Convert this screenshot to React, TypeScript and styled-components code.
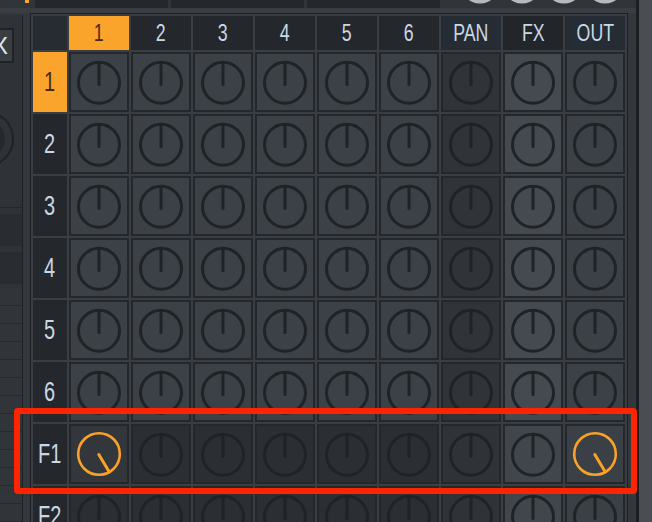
import styled, { createGlobalStyle } from 'styled-components';

const GlobalStyle = createGlobalStyle`
  html, body {
    margin: 0;
    width: 652px;
    height: 522px;
    overflow: hidden;
    background: #33373c;
    font-family: "Liberation Sans", Arial, sans-serif;
  }
`;

const ORANGE = '#fba42c';

const Screen = styled.div`
  position: relative;
  display: flex;
  width: 652px;
  height: 522px;
  overflow: hidden;
`;

const Workspace = styled.div`
  display: flex;
  flex-direction: column;
  width: 636px;
  flex-shrink: 0;
  background: #34383d;
`;

const TopStrip = styled.div`
  display: flex;
  flex-shrink: 0;
  align-items: flex-start;
  height: 8px;
  padding-left: 25px;
  padding-right: 8px;
  background: #31353a;
`;

const StripTick = styled.div`
  width: 4px;
  height: 3px;
  background: ${ORANGE};
  margin-right: 6px;
`;

const StripSlots = styled.div`
  display: flex;
  gap: 3px;
`;

const StripSlot = styled.div`
  width: 133px;
  height: 8px;
  background: #24282c;
`;

const StripDials = styled.svg`
  margin-left: auto;
  display: block;
`;

const StripGap = styled.div`
  flex-shrink: 0;
  height: 5px;
  background: #3a3e43;
`;

const Body = styled.div`
  display: flex;
  flex-shrink: 0;
  align-items: flex-start;
`;

const LeftPanel = styled.div`
  display: flex;
  flex-direction: column;
  flex-shrink: 0;
  width: 22px;
  margin-top: 2px;
  border-right: 1px solid #1d2024;
  background: #2f3337;
  height: 520px;
`;

const ToolSection = styled.div`
  display: flex;
  flex-direction: column;
  flex-shrink: 0;
  height: 193px;
  padding-top: 13px;
  box-sizing: border-box;
  border-bottom: 1px solid #24282c;
`;

const CloseButton = styled.div`
  width: 12px;
  height: 31px;
  border: 2px solid #1f2326;
  border-left: none;
  background: #393e43;
  overflow: hidden;
  display: flex;
  align-items: center;
`;

const CloseGlyph = styled.span`
  margin-left: -8px;
  color: #dde6ee;
  font-size: 24px;
  line-height: 1;
`;

const SideKnob = styled.svg`
  display: block;
  margin-top: 47px;
`;

const SideSlot = styled.div`
  flex-shrink: 0;
  height: 32px;
  margin-top: 6px;
  background: #292d31;
`;

const SideList = styled.div`
  display: flex;
  flex-direction: column;
  margin-top: 4px;
  background: #31353a;
`;

const SideRow = styled.div`
  flex-shrink: 0;
  height: 17px;
  border-bottom: 1px solid #262a2e;
`;

const Grid = styled.div`
  display: grid;
  flex-shrink: 0;
  grid-template-columns: 34px repeat(9, 60px);
  grid-template-rows: 34px;
  grid-auto-rows: 60px;
  gap: 2px;
  padding: 2px;
  margin-left: 7px;
  border: 1px solid #1c1f23;
  background: #3a3e43;
`;

const HeadCell = styled.div<{ $bg: string; $active?: boolean }>`
  display: flex;
  align-items: center;
  justify-content: center;
  background: ${(p) => p.$bg};
  color: ${(p) => (p.$active ? '#4a2b10' : '#c9d8e5')};
  font-size: 24px;
  overflow: hidden;
`;

const RowLabel = styled(HeadCell)`
  font-size: 27px;
`;

const Narrow = styled.span`
  display: inline-block;
  transform: scaleX(0.74);
  line-height: 1;
`;

const KnobCell = styled.div<{ $fill: string }>`
  box-sizing: border-box;
  border: 2px solid #24282c;
  background: ${(p) => p.$fill};
  display: flex;
  align-items: center;
  justify-content: center;
`;

const Annotation = styled.div`
  position: absolute;
  left: 14px;
  top: 408px;
  width: 623px;
  height: 86px;
  box-sizing: border-box;
  border: 6px solid #ff2400;
  border-radius: 4px;
  pointer-events: none;
`;

const Divider = styled.div`
  width: 3px;
  flex-shrink: 0;
  background: #1c1f22;
`;

const RightPanel = styled.div`
  flex: 1;
  background: #4a4e53;
`;

const columns = ['1', '2', '3', '4', '5', '6', 'PAN', 'FX', 'OUT'];
const rows = ['1', '2', '3', '4', '5', '6', 'F1', 'F2', 'F3'];

const headBg = (col: string, i: number) => {
  if (i === 0) return ORANGE;
  if (col === 'PAN' || col === 'OUT') return '#262c33';
  if (col === 'FX') return '#22262a';
  return '#24282c';
};

const cellFill = (row: string, c: number) => {
  const send = row.startsWith('F');
  if (c === 6) return send ? '#2f3338' : '#303439';
  if (c === 7) return send ? '#41464c' : '#454a51';
  if (c === 8) return send ? '#3b4046' : '#3c4147';
  if (!send) return '#3c4147';
  return row === 'F1' && c === 0 ? '#33373b' : '#2b2f33';
};

const Knob = ({ active }: { active: boolean }) =>
  active ? (
    <svg width={56} height={56} viewBox="0 0 56 56">
      <circle cx={28} cy={28} r={20.8} fill="none" stroke="#f9a22a" strokeWidth={2.6} />
      <line x1={27.8} y1={28.5} x2={38} y2={45.6} stroke="#f9a22a" strokeWidth={3} strokeLinecap="round" />
    </svg>
  ) : (
    <svg width={56} height={56} viewBox="0 0 56 56">
      <circle cx={28} cy={28.7} r={20.5} fill="none" stroke="#1f2326" strokeWidth={3} />
      <line x1={28} y1={30.5} x2={28} y2={9.3} stroke="#1f2326" strokeWidth={3} strokeLinecap="round" />
    </svg>
  );

export default function App() {
  return (
    <>
      <GlobalStyle />
      <Screen>
        <Workspace>
          <TopStrip>
            <StripTick />
            <StripSlots>
              <StripSlot />
              <StripSlot />
              <StripSlot />
            </StripSlots>
            <StripDials width={172} height={8} viewBox="0 0 172 8">
              {[24, 66, 108, 149].map((cx) => (
                <circle key={cx} cx={cx} cy={-16.6} r={20} fill="#b6babe" />
              ))}
            </StripDials>
          </TopStrip>
          <StripGap />
          <Body>
            <LeftPanel>
              <ToolSection>
                <CloseButton>
                  <CloseGlyph>X</CloseGlyph>
                </CloseButton>
                <SideKnob width={22} height={58} viewBox="0 0 22 58">
                  <circle cx={-14} cy={29} r={19} fill="#25292d" />
                  <circle cx={-14} cy={29} r={27} fill="none" stroke="#1f2326" strokeWidth={2} />
                </SideKnob>
              </ToolSection>
              <SideSlot />
              <SideSlot />
              <SideList>
                {Array.from({ length: 14 }, (_, i) => (
                  <SideRow key={i} />
                ))}
              </SideList>
            </LeftPanel>
            <Grid>
              <HeadCell $bg="#272c32" />
              {columns.map((col, i) => (
                <HeadCell key={col} $bg={headBg(col, i)} $active={i === 0}>
                  <Narrow>{col}</Narrow>
                </HeadCell>
              ))}
              {rows.map((row, r) => [
                <RowLabel key={`l${row}`} $bg={r === 0 ? ORANGE : '#24282c'} $active={r === 0}>
                  <Narrow>{row}</Narrow>
                </RowLabel>,
                ...columns.map((col, c) => (
                  <KnobCell key={`${row}-${col}`} $fill={cellFill(row, c)}>
                    <Knob active={row === 'F1' && (c === 0 || c === 8)} />
                  </KnobCell>
                )),
              ])}
            </Grid>
          </Body>
        </Workspace>
        <Divider />
        <RightPanel />
        <Annotation />
      </Screen>
    </>
  );
}
